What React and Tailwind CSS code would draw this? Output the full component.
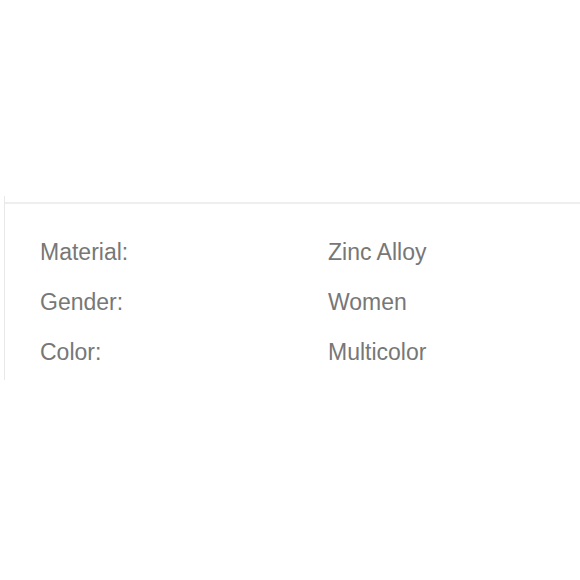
const specs = [
  { label: "Material:", value: "Zinc Alloy" },
  { label: "Gender:", value: "Women" },
  { label: "Color:", value: "Multicolor" },
];

export default function App() {
  return (
    <div className="w-[580px] h-[580px] bg-white overflow-hidden font-['Liberation_Sans',Arial,sans-serif]">
      <div className="mt-[196px] ml-[4px] h-[184px] pt-[6px] border-l border-[#e8e8e8]">
        <div className="border-t-2 border-[#eeeeee] pt-[28px]">
          {specs.map((s) => (
            <div key={s.label} className="flex h-[50px] items-start text-[23px] leading-[44px] text-[#777777]">
              <div className="w-[323px] pl-[35px] -mt-[2px]">{s.label}</div>
              <div className="-mt-[2px]">{s.value}</div>
            </div>
          ))}
        </div>
      </div>
    </div>
  );
}
